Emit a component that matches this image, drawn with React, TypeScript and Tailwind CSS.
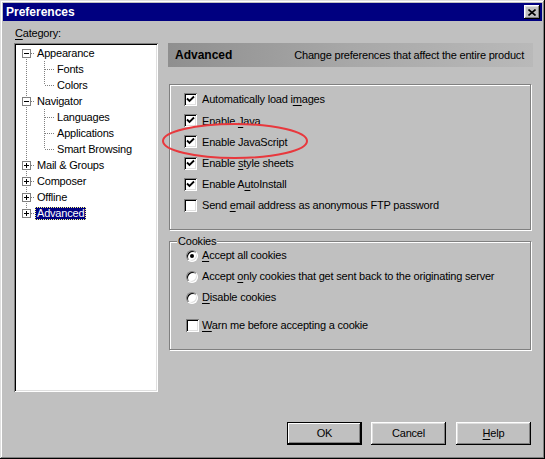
import React from "react";

const font = "font-['Liberation_Sans',Arial,sans-serif]";
const sunken =
  "shadow-[inset_1px_1px_#808080,inset_-1px_-1px_#fff,inset_2px_2px_#000,inset_-2px_-2px_#dfdfdf]";
const raised =
  "shadow-[inset_-1px_-1px_#000,inset_1px_1px_#fff,inset_-2px_-2px_#808080,inset_2px_2px_#dfdfdf]";

type Node = {
  label: string;
  level: 0 | 1;
  expander?: "minus" | "plus";
  first?: boolean;
  lastTop?: boolean;
  lastChild?: boolean;
  selected?: boolean;
};

const tree: Node[] = [
  { label: "Appearance", level: 0, expander: "minus", first: true },
  { label: "Fonts", level: 1 },
  { label: "Colors", level: 1, lastChild: true },
  { label: "Navigator", level: 0, expander: "minus" },
  { label: "Languages", level: 1 },
  { label: "Applications", level: 1 },
  { label: "Smart Browsing", level: 1, lastChild: true },
  { label: "Mail & Groups", level: 0, expander: "plus" },
  { label: "Composer", level: 0, expander: "plus" },
  { label: "Offline", level: 0, expander: "plus" },
  { label: "Advanced", level: 0, expander: "plus", lastTop: true, selected: true },
];

function TreeRow({ node }: { node: Node }) {
  const dot = { stroke: "#808080", strokeDasharray: "1 1", shapeRendering: "crispEdges" as const };
  const w = node.level === 0 ? 19 : 39;
  return (
    <div className="flex h-[16px] items-center">
      <svg width={w} height={16} className="shrink-0">
        {node.level === 0 ? (
          <>
            <line x1={10.5} y1={node.first ? 8 : 0} x2={10.5} y2={node.lastTop ? 8 : 16} {...dot} />
            <line x1={15} y1={8.5} x2={19} y2={8.5} {...dot} />
            <rect x={6.5} y={4.5} width={8} height={8} fill="#fff" stroke="#808080" shapeRendering="crispEdges" />
            <line x1={8} y1={8.5} x2={13} y2={8.5} stroke="#000" shapeRendering="crispEdges" />
            {node.expander === "plus" && (
              <line x1={10.5} y1={6} x2={10.5} y2={11} stroke="#000" shapeRendering="crispEdges" />
            )}
          </>
        ) : (
          <>
            <line x1={10.5} y1={0} x2={10.5} y2={16} {...dot} />
            <line x1={28.5} y1={0} x2={28.5} y2={node.lastChild ? 8 : 16} {...dot} />
            <line x1={29} y1={8.5} x2={38} y2={8.5} {...dot} />
          </>
        )}
      </svg>
      <span
        className={`px-[2px] leading-[13px] ${
          node.selected
            ? "bg-[#000080] text-white outline outline-1 outline-dotted outline-[#ffff80] -outline-offset-1"
            : ""
        }`}
      >
        {node.label}
      </span>
    </div>
  );
}

function CheckBox({ checked }: { checked: boolean }) {
  return (
    <div className={`flex h-[13px] w-[13px] shrink-0 items-center justify-center bg-white ${sunken}`}>
      {checked && (
        <svg width={9} height={9} viewBox="0 0 9 9">
          <path d="M1 3.5 L3.5 6 L8 1.5" fill="none" stroke="#000" strokeWidth={1.8} />
        </svg>
      )}
    </div>
  );
}

function Radio({ checked }: { checked: boolean }) {
  return (
    <div className="flex h-[12px] w-[12px] shrink-0 items-center justify-center rounded-full border border-[#808080] border-b-white border-r-white bg-white shadow-[inset_1px_1px_#000,inset_-1px_-1px_#dfdfdf]">
      {checked && <div className="h-[4px] w-[4px] rounded-full bg-black" />}
    </div>
  );
}

function Label({ text, u }: { text: string; u?: number }) {
  if (u === undefined) return <span>{text}</span>;
  return (
    <span>
      {text.slice(0, u)}
      <span className="underline underline-offset-2">{text[u]}</span>
      {text.slice(u + 1)}
    </span>
  );
}

const options = [
  { text: "Automatically load images", u: 20, checked: true },
  { text: "Enable Java", u: 7, checked: true },
  { text: "Enable JavaScript", checked: true },
  { text: "Enable style sheets", u: 7, checked: true },
  { text: "Enable AutoInstall", u: 8, checked: true },
  { text: "Send email address as anonymous FTP password", u: 5, checked: false },
];

const cookies = [
  { text: "Accept all cookies", u: 0, checked: true },
  { text: "Accept only cookies that get sent back to the originating server", u: 7, checked: false },
  { text: "Disable cookies", u: 0, checked: false },
];

function Button({ children, def }: { children: React.ReactNode; def?: boolean }) {
  return (
    <div
      className={`flex h-[23px] w-[75px] items-center justify-center bg-[#c0c0c0] ${
        def ? "border border-black shadow-[inset_-1px_-1px_#000,inset_1px_1px_#fff,inset_-2px_-2px_#808080]" : raised
      }`}
    >
      {children}
    </div>
  );
}

export default function App() {
  return (
    <div
      className={`relative flex h-[459px] w-[545px] flex-col bg-[#c0c0c0] p-[3px] text-[11px] tracking-[-0.2px] text-black ${font} shadow-[inset_-1px_-1px_#000,inset_1px_1px_#dfdfdf,inset_-2px_-2px_#808080,inset_2px_2px_#fff]`}
    >
      {/* title bar */}
      <div className="flex h-[18px] items-center justify-between bg-[#000080] pl-[3px] pr-[2px]">
        <span className="text-[12px] font-bold tracking-normal text-white">Preferences</span>
        <div className={`flex h-[14px] w-[16px] items-center justify-center bg-[#c0c0c0] ${raised}`}>
          <svg width={8} height={7} viewBox="0 0 8 7">
            <path d="M0.5 0.5 L7.5 6.5 M7.5 0.5 L0.5 6.5" stroke="#000" strokeWidth={1.6} />
          </svg>
        </div>
      </div>

      <div className="flex pt-[5px]">
        {/* left: category tree */}
        <div className="ml-[11px] flex w-[144px] flex-col">
          <div className="h-[17px] pl-[1px] leading-[14px]">
            <Label text="Category:" u={0} />
          </div>
          <div className={`h-[349px] bg-white p-[2px] ${sunken}`}>
            {tree.map((n) => (
              <TreeRow key={n.label} node={n} />
            ))}
          </div>
        </div>

        {/* right: panel */}
        <div className="ml-[10px] flex w-[365px] flex-col pt-[17px]">
          <div className="flex h-[24px] items-center justify-between bg-linear-to-r from-[#8f8f8f] via-[#a8a8a8] to-[#b9b9b9] pl-[7px] pr-[9px]">
            <span className="text-[12px] font-bold tracking-normal">Advanced</span>
            <span>Change preferences that affect the entire product</span>
          </div>

          <div className="ml-[1px] mt-[17px] h-[146px] w-[362px] border border-[#808080] pl-[14px] pt-[4px] shadow-[inset_1px_1px_#fff,1px_1px_#fff]">
            {options.map((o) => (
              <div key={o.text} className="flex h-[21.2px] items-center gap-[5px]">
                <CheckBox checked={o.checked} />
                <Label text={o.text} u={o.u} />
              </div>
            ))}
          </div>

          <div className="relative ml-[1px] mt-[11px] h-[109px] w-[362px] border border-[#808080] pl-[16px] pt-[3px] shadow-[inset_1px_1px_#fff,1px_1px_#fff]">
            <span className="absolute left-[7px] top-[-8px] bg-[#c0c0c0] px-[1px] leading-[14px]">Cookies</span>
            {cookies.map((c) => (
              <div key={c.text} className="flex h-[21px] items-center gap-[4px]">
                <Radio checked={c.checked} />
                <Label text={c.text} u={c.u} />
              </div>
            ))}
            <div className="mt-[7px] flex h-[21px] items-center gap-[3px]">
              <CheckBox checked={false} />
              <Label text="Warn me before accepting a cookie" u={0} />
            </div>
          </div>
        </div>
      </div>

      {/* buttons */}
      <div className="mt-[30px] flex justify-end gap-[9px] pr-[11px]">
        <Button def>OK</Button>
        <Button>Cancel</Button>
        <div className="ml-[1px]">
          <Button>
            <Label text="Help" u={0} />
          </Button>
        </div>
      </div>

      {/* red annotation ellipse */}
      <svg className="pointer-events-none absolute left-[160px] top-[119px]" width={152} height={42}>
        <ellipse cx={75} cy={22} rx={72} ry={17} fill="none" stroke="#e8383d" strokeWidth={2} />
      </svg>
    </div>
  );
}
